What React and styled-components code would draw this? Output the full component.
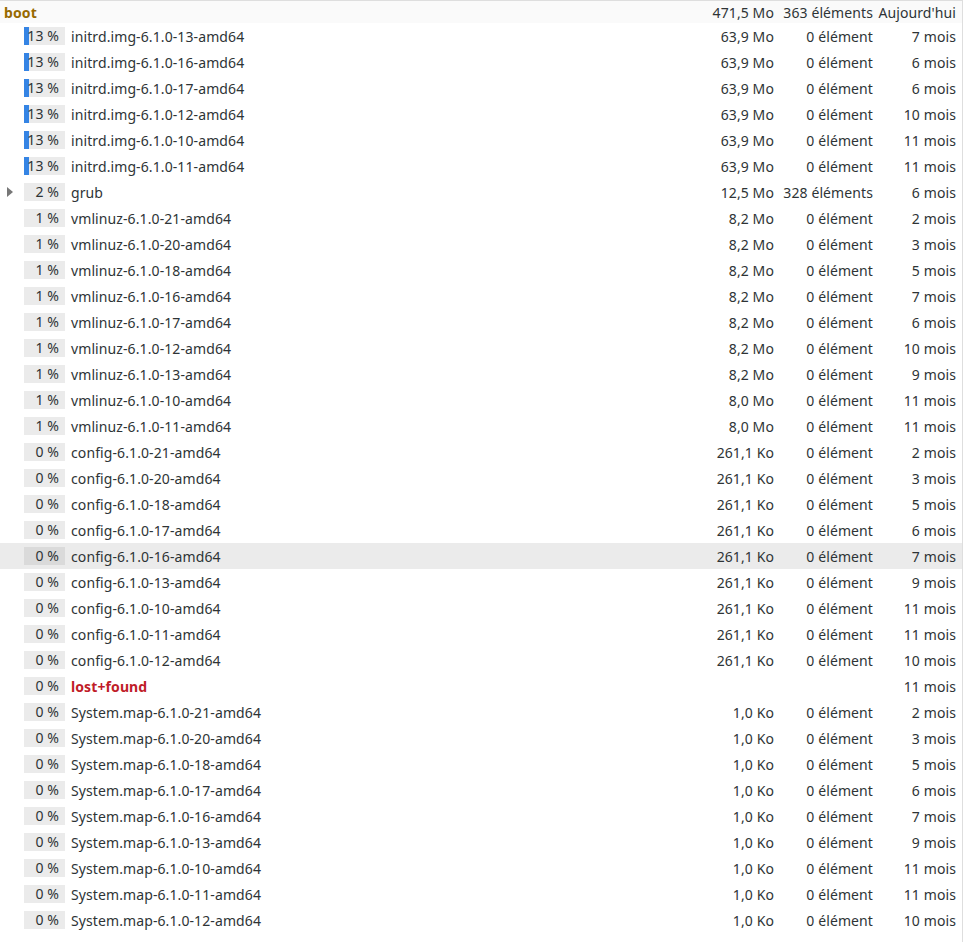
import React from 'react';
import styled, { createGlobalStyle } from 'styled-components';

const GlobalStyle = createGlobalStyle`
  html, body {
    margin: 0;
    padding: 0;
    background: #ffffff;
  }
  body {
    font-family: "Noto Sans", "Open Sans", sans-serif;
    font-size: 14px;
    letter-spacing: 0.1px;
    color: #2e3436;
  }
`;

const Panel = styled.div`
  box-sizing: border-box;
  width: 963px;
  height: 942px;
  border-top: 1px solid #dedede;
  border-right: 1px solid #dedede;
  background: #ffffff;
`;

const Row = styled.div`
  display: grid;
  grid-template-columns: 24px 41px 1fr 110px 99px 83px;
  align-items: center;
  height: ${p => (p.root ? '22px' : '26px')};
  padding-right: 6px;
  background: ${p => (p.root ? '#fafafa' : p.selected ? '#ebebeb' : 'transparent')};
  white-space: nowrap;
`;

const RootName = styled.div`
  grid-column: 1 / 4;
  padding-left: 4px;
  font-weight: 700;
  color: #986a00;
`;

const Expander = styled.div`
  display: flex;
  align-items: center;
  justify-content: flex-start;
  padding-left: 7px;
`;

const Triangle = styled.span`
  width: 0;
  height: 0;
  border-top: 5px solid transparent;
  border-bottom: 5px solid transparent;
  border-left: 6px solid #777777;
`;

const Percent = styled.div`
  position: relative;
  box-sizing: border-box;
  height: 18px;
  background: ${p => (p.selected ? '#dadada' : '#ebebeb')};
  overflow: hidden;
`;

const Fill = styled.div`
  position: absolute;
  left: 0;
  top: 0;
  bottom: 0;
  background: #3584e4;
`;

const PercentText = styled.span`
  position: absolute;
  right: 6px;
  top: 0;
  line-height: 18px;
`;

const Name = styled.div`
  padding-left: 6px;
  overflow: hidden;
  text-overflow: ellipsis;
  font-weight: ${p => (p.special ? 700 : 400)};
  color: ${p => (p.special ? '#c01c28' : 'inherit')};
`;

const Cell = styled.div`
  text-align: right;
`;

const files = [
  ['13', 'initrd.img-6.1.0-13-amd64', '63,9 Mo', '0 élément', '7 mois'],
  ['13', 'initrd.img-6.1.0-16-amd64', '63,9 Mo', '0 élément', '6 mois'],
  ['13', 'initrd.img-6.1.0-17-amd64', '63,9 Mo', '0 élément', '6 mois'],
  ['13', 'initrd.img-6.1.0-12-amd64', '63,9 Mo', '0 élément', '10 mois'],
  ['13', 'initrd.img-6.1.0-10-amd64', '63,9 Mo', '0 élément', '11 mois'],
  ['13', 'initrd.img-6.1.0-11-amd64', '63,9 Mo', '0 élément', '11 mois'],
  ['2', 'grub', '12,5 Mo', '328 éléments', '6 mois', 'dir'],
  ['1', 'vmlinuz-6.1.0-21-amd64', '8,2 Mo', '0 élément', '2 mois'],
  ['1', 'vmlinuz-6.1.0-20-amd64', '8,2 Mo', '0 élément', '3 mois'],
  ['1', 'vmlinuz-6.1.0-18-amd64', '8,2 Mo', '0 élément', '5 mois'],
  ['1', 'vmlinuz-6.1.0-16-amd64', '8,2 Mo', '0 élément', '7 mois'],
  ['1', 'vmlinuz-6.1.0-17-amd64', '8,2 Mo', '0 élément', '6 mois'],
  ['1', 'vmlinuz-6.1.0-12-amd64', '8,2 Mo', '0 élément', '10 mois'],
  ['1', 'vmlinuz-6.1.0-13-amd64', '8,2 Mo', '0 élément', '9 mois'],
  ['1', 'vmlinuz-6.1.0-10-amd64', '8,0 Mo', '0 élément', '11 mois'],
  ['1', 'vmlinuz-6.1.0-11-amd64', '8,0 Mo', '0 élément', '11 mois'],
  ['0', 'config-6.1.0-21-amd64', '261,1 Ko', '0 élément', '2 mois'],
  ['0', 'config-6.1.0-20-amd64', '261,1 Ko', '0 élément', '3 mois'],
  ['0', 'config-6.1.0-18-amd64', '261,1 Ko', '0 élément', '5 mois'],
  ['0', 'config-6.1.0-17-amd64', '261,1 Ko', '0 élément', '6 mois'],
  ['0', 'config-6.1.0-16-amd64', '261,1 Ko', '0 élément', '7 mois', 'selected'],
  ['0', 'config-6.1.0-13-amd64', '261,1 Ko', '0 élément', '9 mois'],
  ['0', 'config-6.1.0-10-amd64', '261,1 Ko', '0 élément', '11 mois'],
  ['0', 'config-6.1.0-11-amd64', '261,1 Ko', '0 élément', '11 mois'],
  ['0', 'config-6.1.0-12-amd64', '261,1 Ko', '0 élément', '10 mois'],
  ['0', 'lost+found', '', '', '11 mois', 'special'],
  ['0', 'System.map-6.1.0-21-amd64', '1,0 Ko', '0 élément', '2 mois'],
  ['0', 'System.map-6.1.0-20-amd64', '1,0 Ko', '0 élément', '3 mois'],
  ['0', 'System.map-6.1.0-18-amd64', '1,0 Ko', '0 élément', '5 mois'],
  ['0', 'System.map-6.1.0-17-amd64', '1,0 Ko', '0 élément', '6 mois'],
  ['0', 'System.map-6.1.0-16-amd64', '1,0 Ko', '0 élément', '7 mois'],
  ['0', 'System.map-6.1.0-13-amd64', '1,0 Ko', '0 élément', '9 mois'],
  ['0', 'System.map-6.1.0-10-amd64', '1,0 Ko', '0 élément', '11 mois'],
  ['0', 'System.map-6.1.0-11-amd64', '1,0 Ko', '0 élément', '11 mois'],
  ['0', 'System.map-6.1.0-12-amd64', '1,0 Ko', '0 élément', '10 mois'],
];

// bar box is 41px wide; tiny shares round down to nothing
const fillWidth = pct => Math.floor((Number(pct) * 41) / 100);

const FileRow = ({ pct, name, size, count, date, flag }) => {
  const selected = flag === 'selected';
  const width = fillWidth(pct);
  return (
    <Row selected={selected}>
      <Expander>{flag === 'dir' && <Triangle />}</Expander>
      <Percent selected={selected}>
        {width > 0 && <Fill style={{ width: `${width}px` }} />}
        <PercentText>{pct} %</PercentText>
      </Percent>
      <Name special={flag === 'special'}>{name}</Name>
      <Cell>{size}</Cell>
      <Cell>{count}</Cell>
      <Cell>{date}</Cell>
    </Row>
  );
};

const App = () => (
  <>
    <GlobalStyle />
    <Panel>
      <Row root>
        <RootName>boot</RootName>
        <Cell>471,5 Mo</Cell>
        <Cell>363 éléments</Cell>
        <Cell>Aujourd'hui</Cell>
      </Row>
      {files.map(([pct, name, size, count, date, flag]) => (
        <FileRow
          key={name}
          pct={pct}
          name={name}
          size={size}
          count={count}
          date={date}
          flag={flag}
        />
      ))}
    </Panel>
  </>
);

export default App;
